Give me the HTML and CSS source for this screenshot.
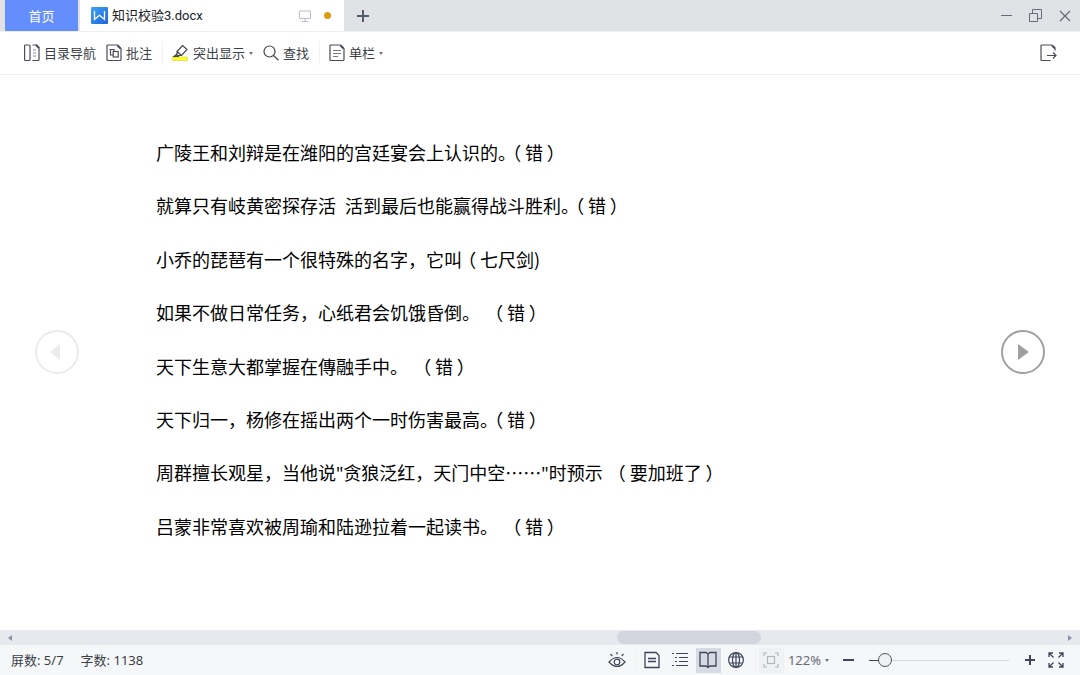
FILE: index.html
```
<!DOCTYPE html>
<html lang="zh-CN">
<head>
<meta charset="utf-8">
<title>知识校验3.docx</title>
<link rel="stylesheet" href="styles.css">
</head>
<body>
<header class="titlebar">
  <button class="home-tab">首页</button>
  <div class="doc-tab">
    <svg class="logo" width="17" height="17" viewBox="0 0 17 17"><defs><linearGradient id="lg" x1="0" y1="0" x2="1" y2="1"><stop offset="0" stop-color="#3fa2f5"/><stop offset="1" stop-color="#1c66d8"/></linearGradient></defs><rect width="17" height="17" rx="1" fill="url(#lg)"/><path d="M3.500 4v8.300l5-4 5 4V4" fill="none" stroke="#fff" stroke-width="1.300"/></svg>
    <span class="doc-name">知识校验3.docx</span>
    <svg width="12" height="12" viewBox="0 0 12 12" fill="none" stroke="#b9bdc8"><path d="M.5 1h11v7.500H.5zM6 8.500v2.500M3 11.500h6"/></svg>
    <span class="unsaved"></span>
  </div>
  <button class="icon-btn new-tab" aria-label="新建"><svg width="14" height="14" viewBox="0 0 14 14" stroke="#525b6b" stroke-width="2"><path d="M7 1v12M1 7h12"/></svg></button>
  <div class="window-controls">
    <button class="icon-btn" aria-label="最小化"><svg width="12" height="12" viewBox="0 0 12 12" stroke="#666b7c"><path d="M1 5.500h11"/></svg></button>
    <button class="icon-btn" aria-label="还原"><svg width="13" height="13" viewBox="0 0 13 13" fill="none" stroke="#666b7c"><path d="M.5 4.500h8v8h-8zM3.500 4.500v-4h9v9h-4"/></svg></button>
    <button class="icon-btn" aria-label="关闭"><svg width="12" height="12" viewBox="0 0 12 12" stroke="#5f6473" stroke-width="1.100"><path d="M1 1l10 10M11 1L1 11"/></svg></button>
  </div>
</header>

<nav class="toolbar">
  <button class="tool"><svg width="16" height="18" viewBox="0 0 16 18" fill="none" stroke="#4a4d57" stroke-width="1.200"><rect x=".6" y="1" width="5.400" height="15.500" rx="1"/><path d="M8.500 1h4l2.500 2.500v12q0 1-1 1H8.500"/><path d="M12 1l3 3" stroke-width="1.800"/><path d="M9 6h3M9 9h3M9 12h3" stroke="#8a8d95"/></svg>目录导航</button>
  <button class="tool"><svg width="16" height="18" viewBox="0 0 16 18" fill="none" stroke="#4a4d57" stroke-width="1.200"><path d="M2 1h9.500L15 4.500V15.500q0 1-1 1H2q-1 0-1-1V2q0-1 1-1z"/><path d="M11.500 1.500l3 3" stroke-width="1.800"/><path d="M8 5.500H3.500M4.500 5.500v5.500h3M8 5v2.500"/><rect x="7.200" y="7.500" width="5" height="5.500"/></svg>批注</button>
  <span class="sep"></span>
  <button class="tool"><svg width="17" height="18" viewBox="0 0 17 18" fill="none" stroke="#43464e" stroke-width="1.200"><path d="M.5 13h15v3.500H.5z" fill="#ffff19" stroke="#cfd83a" stroke-width=".6"/><path d="M10.500 1.500L15 5.500 9.500 11.500 5 11.500V7.500zM5 7.500L9.500 11.500M5 10l-3 2.500h5"/></svg>突出显示<i class="caret"></i></button>
  <button class="tool"><svg width="16" height="18" viewBox="0 0 16 18" fill="none" stroke="#43464e" stroke-width="1.200"><circle cx="6.500" cy="7.500" r="5.500"/><path d="M10.500 11.500l5 4.700"/></svg>查找</button>
  <span class="sep"></span>
  <button class="tool"><svg width="16" height="18" viewBox="0 0 16 18" fill="none" stroke="#4a4d57" stroke-width="1.200"><path d="M2 1h9.500L15 4.500V15.500q0 1-1 1H2q-1 0-1-1V2q0-1 1-1z"/><path d="M11.500 1.500l3 3" stroke-width="1.800"/><path d="M4 6.500h8M4 9.500h8M4 12.500h5" stroke="#777a83"/></svg>单栏<i class="caret"></i></button>
  <button class="icon-btn exit" aria-label="退出阅读"><svg width="18" height="18" viewBox="0 0 18 18" fill="none" stroke="#4a4d57" stroke-width="1.200"><path d="M10.500 16.500H2q-1 0-1-1V2q0-1 1-1h10l3 3v2.500"/><path d="M12 1.500l3 3" stroke-width="1.800"/><path d="M7 11.500h9M13 8.500l3 3-3 3"/></svg></button>
</nav>

<main class="reader">
  <button class="page-btn prev" aria-label="上一屏" disabled><svg width="44" height="44" viewBox="0 0 44 44"><circle cx="22" cy="22" r="21" fill="none" stroke="currentColor" stroke-width="2"/><path d="M15 22l10-8v16z" fill="currentColor"/></svg></button>
  <article class="text">
    <p>广陵王和刘辩是在潍阳的宫廷宴会上认识的<span class="half">。</span><span class="paren">（</span>错<span class="paren">）</span></p>
    <p>就算只有岐黄密探存活&ensp;活到最后也能赢得战斗胜利<span class="half">。</span><span class="paren">（</span>错<span class="paren">）</span></p>
    <p>小乔的琵琶有一个很特殊的名字，它叫<span class="paren">（</span>七尺剑)</p>
    <p>如果不做日常任务，心纸君会饥饿昏倒。&ensp;<span class="paren">（</span>错<span class="paren">）</span></p>
    <p>天下生意大都掌握在傳融手中。&ensp;<span class="paren">（</span>错<span class="paren">）</span></p>
    <p>天下归一，杨修在摇出两个一时伤害最高<span class="half">。</span><span class="paren">（</span>错<span class="paren">）</span></p>
    <p>周群擅长观星，当他说<span class="latin">"</span>贪狼泛红，天门中空……<span class="latin">"</span>时预示&ensp;<span class="paren">（</span>要加班了<span class="paren">）</span></p>
    <p>吕蒙非常喜欢被周瑜和陆逊拉着一起读书。&ensp;<span class="paren">（</span>错<span class="paren">）</span></p>
  </article>
  <button class="page-btn" aria-label="下一屏"><svg width="44" height="44" viewBox="0 0 44 44"><circle cx="22" cy="22" r="21" fill="none" stroke="currentColor" stroke-width="2"/><path d="M28 22l-11-8v16z" fill="currentColor"/></svg></button>
</main>

<div class="scrollbar">
  <svg width="4" height="8" viewBox="0 0 4 8"><path d="M4 1v6L0 4z" fill="#8d93a5"/></svg>
  <div class="track"><div class="thumb"></div></div>
  <svg width="4" height="8" viewBox="0 0 4 8"><path d="M0 1v6l4-3z" fill="#8d93a5"/></svg>
</div>

<footer class="statusbar">
  <span class="stat">屏数: 5/7</span>
  <span class="stat">字数: 1138</span>
  <div class="views">
    <button class="icon-btn view" aria-label="护眼模式"><svg width="18" height="18" viewBox="0 0 18 18" fill="none" stroke="#3f4658" stroke-width="1.200"><path d="M1 11q8-9 16 0-8 9-16 0z"/><circle cx="9" cy="11" r="2.800"/><path d="M9 1v2.500M2.500 3l1.800 2M15.500 3l-1.800 2"/></svg></button>
    <span class="sep small"></span>
    <button class="icon-btn view" aria-label="页面视图"><svg width="16" height="18" viewBox="0 0 16 18" fill="none" stroke="#3f4658" stroke-width="1.300"><path d="M1 1.500h11l3 3v12H1z"/><path d="M4 7.500h8M4 10.500h8"/></svg></button>
    <button class="icon-btn view" aria-label="大纲"><svg width="16" height="16" viewBox="0 0 16 16" fill="none" stroke="#3f4658" stroke-width="1.200"><path d="M0 1.500h2M4 1.500h12M3 5.500h2M7 5.500h9M3 9.500h2M7 9.500h9M0 13.500h2M4 13.500h12"/></svg></button>
    <button class="icon-btn view active" aria-label="阅读版式"><svg width="18" height="18" viewBox="0 0 18 18" fill="none" stroke="#3f4658" stroke-width="1.300"><path d="M9 3L7 1.500H1V15h6l2 1.500 2-1.500h6V1.500h-6zM9 3v13"/></svg></button>
    <button class="icon-btn view" aria-label="Web版式"><svg width="18" height="18" viewBox="0 0 18 18" fill="none" stroke="#3f4658" stroke-width="1.200"><circle cx="9" cy="9" r="7.400"/><ellipse cx="9" cy="9" rx="3.500" ry="7.400"/><path d="M9 1.500v15M2.500 6h13M2.500 12h13"/></svg></button>
    <span class="sep small"></span>
    <button class="icon-btn view fit" aria-label="适合页面" disabled><svg width="16" height="16" viewBox="0 0 16 16" fill="none" stroke="#b2b5bb" stroke-width="1.200"><path d="M1 4V1h3M12 1h3v3M15 12v3h-3M4 15H1v-3"/><rect x="4.500" y="4.500" width="7" height="7"/></svg></button>
    <button class="zoom-value">122%<i class="caret"></i></button>
    <button class="icon-btn" aria-label="缩小"><svg width="12" height="12" viewBox="0 0 12 12" stroke="#3f4658" stroke-width="2"><path d="M1 6h11"/></svg></button>
    <input class="zoom" type="range" min="0" max="100" value="7" aria-label="缩放">
    <button class="icon-btn" aria-label="放大"><svg width="12" height="12" viewBox="0 0 12 12" stroke="#3f4658" stroke-width="2"><path d="M6 1v10M1 6h10"/></svg></button>
    <button class="icon-btn" aria-label="全屏"><svg width="16" height="16" viewBox="0 0 16 16" fill="none" stroke="#3f4658" stroke-width="1.300"><path d="M1 5V1h4M1 1l4.500 4.500M11 1h4v4M15 1l-4.500 4.500M15 11v4h-4M15 15l-4.500-4.500M5 15H1v-4M1 15l4.500-4.500"/></svg></button>
  </div>
</footer>
</body>
</html>
```
FILE: styles.css
```
* { box-sizing: border-box; }
html, body { height: 100%; }
body {
  margin: 0;
  display: flex;
  flex-direction: column;
  background: #fff;
  color: #3c3f48;
  font: 13px/18px "Noto Sans", "Noto Sans CJK SC", sans-serif;
  overflow: hidden;
}
button {
  border: 0;
  padding: 0;
  background: none;
  color: inherit;
  font: inherit;
}
svg { display: block; flex: none; }
.icon-btn { display: flex; align-items: center; justify-content: center; }

.titlebar {
  display: flex;
  flex: none;
  height: 32px;
  padding-left: 5px;
  background: #e0e2e6;
  border-bottom: 1px solid #eeeff1;
}
.home-tab { width: 73px; background: #638efb; color: #fff; }
.doc-tab {
  display: flex;
  align-items: center;
  width: 264px;
  margin-left: 2px;
  padding: 0 13px 0 11px;
  background: #fff;
  color: #202227;
}
.doc-name { flex: 1; margin-left: 4px; font-family: Roboto, "Noto Sans CJK SC", sans-serif; }
.unsaved { width: 7px; height: 7px; margin-left: 13px; border-radius: 50%; background: #e09a10; }
.new-tab { width: 38px; }
.window-controls { display: flex; gap: 17px; margin-left: auto; padding-right: 9px; }

.toolbar {
  display: flex;
  flex: none;
  align-items: center;
  height: 43px;
  padding: 0 22px 0 24px;
  border-bottom: 1px solid #f0f0f1;
}
.tool { display: flex; align-items: center; gap: 4px; margin-right: 10px; }
.sep { width: 1px; height: 24px; margin-right: 9px; background: #f1f1f2; }
.caret {
  border: 2px solid transparent;
  border-top: 3px solid #70747e;
  border-bottom: 0;
}
.exit { margin-left: auto; }

.reader {
  display: flex;
  flex: 1;
  align-items: center;
  min-height: 0;
  padding: 0 35px 2px;
}
.page-btn { color: #a0a0a0; }
.prev { color: #ebebeb; }
.text {
  display: grid;
  flex: 1;
  grid-auto-rows: 1fr;
  align-items: center;
  height: 100%;
  padding: 50px 0 75px 77px;
  color: #000;
  font: 18px/26px "Noto Sans CJK SC", sans-serif;
}
.text p { margin: 0; }
.paren {
  display: inline-block;
  width: 1em;
  text-align: center;
  font-feature-settings: "palt";
}
.half { font-feature-settings: "halt"; }
.latin { font-family: "Noto Sans", sans-serif; }

.scrollbar {
  display: flex;
  flex: none;
  align-items: center;
  height: 15px;
  padding: 0 8px;
  background: #e7e9ee;
}
.track { flex: 1; height: 13px; }
.thumb { width: 13.6%; height: 100%; margin-left: 57.3%; border-radius: 7px; background: #d2d5de; }

.statusbar {
  display: flex;
  flex: none;
  align-items: center;
  height: 30px;
  padding: 0 16px 0 11px;
  background: #f5f7f9;
}
.stat { margin-right: 17px; }
.views { display: flex; align-items: center; margin-left: auto; }
.view { width: 25px; height: 25px; margin-right: 3px; }
.small { height: 18px; margin: 0 3px; }
.active { background: #d5dae3; }
.fit { background: #eff1f3; }
.zoom-value { display: flex; align-items: center; gap: 4px; margin: 0 13px 0 1px; color: #666b76; }
.zoom {
  appearance: none;
  width: 140px;
  height: 16px;
  margin: 0 15px;
  background: linear-gradient(90deg, #3f4658 8%, #d5d7da 8%) center / 100% 1px no-repeat;
}
.zoom::-webkit-slider-thumb {
  appearance: none;
  width: 14px;
  height: 14px;
  border: 1px solid #4f5259;
  border-radius: 50%;
  background: #f0f1f3;
}
.zoom + .icon-btn { margin-right: 12px; }
```
